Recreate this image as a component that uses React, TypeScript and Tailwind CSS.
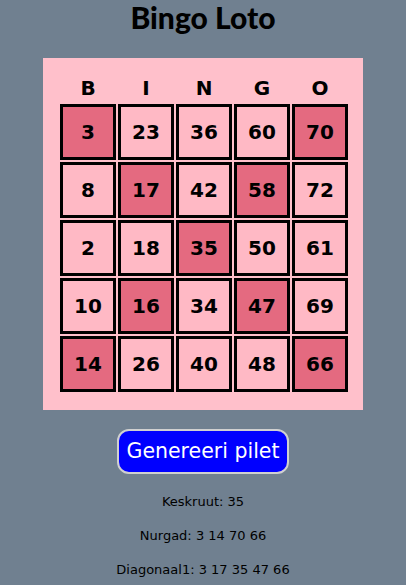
import React from "react";

const headers = ["B", "I", "N", "G", "O"];

const rows: number[][] = [
  [3, 23, 36, 60, 70],
  [8, 17, 42, 58, 72],
  [2, 18, 35, 50, 61],
  [10, 16, 34, 47, 69],
  [14, 26, 40, 48, 66],
];

// märgitud lahtrid: nurgad, keskruut, diagonaalid
const isMarked = (r: number, c: number) =>
  r === c || r + c === 4;

export default function App() {
  return (
    <div className="min-h-[585px] bg-[#708090] flex flex-col items-center text-black">
      <h1 className="text-[30px] leading-[34px] font-black font-['Lato',sans-serif]">
        Bingo Loto
      </h1>

      {/* PILET */}
      <div className="mt-[24px] w-[320px] bg-[#ffc0cb] pt-[16px] pb-[18px] pl-[17px] pr-[15px]">
        <div className="grid grid-cols-5 gap-[2px] font-['DejaVu_Sans',sans-serif] font-bold text-[20px]">
          {headers.map((h) => (
            <div key={h} className="h-[28px] flex items-center justify-center">
              {h}
            </div>
          ))}
          {rows.map((row, r) =>
            row.map((n, c) => (
              <div
                key={`${r}-${c}`}
                className={
                  isMarked(r, c)
                    ? "h-[56px] border-[3px] border-black bg-[#e46a80] flex items-center justify-center"
                    : "h-[56px] border-[3px] border-black bg-[#ffb9c5] flex items-center justify-center"
                }
              >
                {n}
              </div>
            ))
          )}
        </div>
      </div>

      <button className="mt-[19px] w-[172px] h-[45px] rounded-[12px] border-2 border-[#d0d0d0] bg-[#0000ff] text-white text-[20.5px] font-['DejaVu_Sans',sans-serif]">
        Genereeri pilet
      </button>

      <div className="mt-[20px] flex flex-col items-center gap-[18px] text-[13px] leading-[16px] font-['DejaVu_Sans',sans-serif]">
        <p>Keskruut: 35</p>
        <p>Nurgad: 3 14 70 66</p>
        <p>Diagonaal1: 3 17 35 47 66</p>
      </div>
    </div>
  );
}
